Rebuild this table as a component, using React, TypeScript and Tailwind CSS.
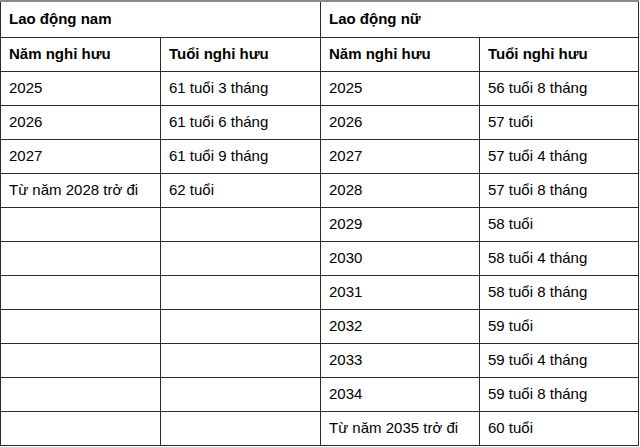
import React from "react";

const rows: [string, string, string, string][] = [
  ["2025", "61 tuổi 3 tháng", "2025", "56 tuổi 8 tháng"],
  ["2026", "61 tuổi 6 tháng", "2026", "57 tuổi"],
  ["2027", "61 tuổi 9 tháng", "2027", "57 tuổi 4 tháng"],
  ["Từ năm 2028 trở đi", "62 tuổi", "2028", "57 tuổi 8 tháng"],
  ["", "", "2029", "58 tuổi"],
  ["", "", "2030", "58 tuổi 4 tháng"],
  ["", "", "2031", "58 tuổi 8 tháng"],
  ["", "", "2032", "59 tuổi"],
  ["", "", "2033", "59 tuổi 4 tháng"],
  ["", "", "2034", "59 tuổi 8 tháng"],
  ["", "", "Từ năm 2035 trở đi", "60 tuổi"],
];

const cell = "border border-[#2a2a2a] px-2 text-left align-middle";

export default function App() {
  return (
    <div className="w-[640px] h-[447px] bg-white overflow-hidden">
      <table
        className="w-[638px] border-collapse table-fixed text-[15px] text-black"
        style={{ fontFamily: '"Liberation Sans", Arial, sans-serif' }}
      >
        <colgroup>
          <col className="w-[160px]" />
          <col className="w-[160px]" />
          <col className="w-[159px]" />
          <col className="w-[159px]" />
        </colgroup>
        <tbody>
          <tr className="h-[36px]">
            <th colSpan={2} className={`${cell} font-bold border-t-[#8a8a8a] border-t-2`}>
              Lao động nam
            </th>
            <th colSpan={2} className={`${cell} font-bold border-t-[#8a8a8a] border-t-2`}>
              Lao động nữ
            </th>
          </tr>
          <tr className="h-[34px]">
            <th className={`${cell} font-bold`}>Năm nghỉ hưu</th>
            <th className={`${cell} font-bold`}>Tuổi nghỉ hưu</th>
            <th className={`${cell} font-bold`}>Năm nghỉ hưu</th>
            <th className={`${cell} font-bold`}>Tuổi nghỉ hưu</th>
          </tr>
          {rows.map((r, i) => (
            <tr key={i} className="h-[34px]">
              {r.map((t, j) => (
                <td key={j} className={`${cell} font-normal`}>
                  {t}
                </td>
              ))}
            </tr>
          ))}
        </tbody>
      </table>
    </div>
  );
}
